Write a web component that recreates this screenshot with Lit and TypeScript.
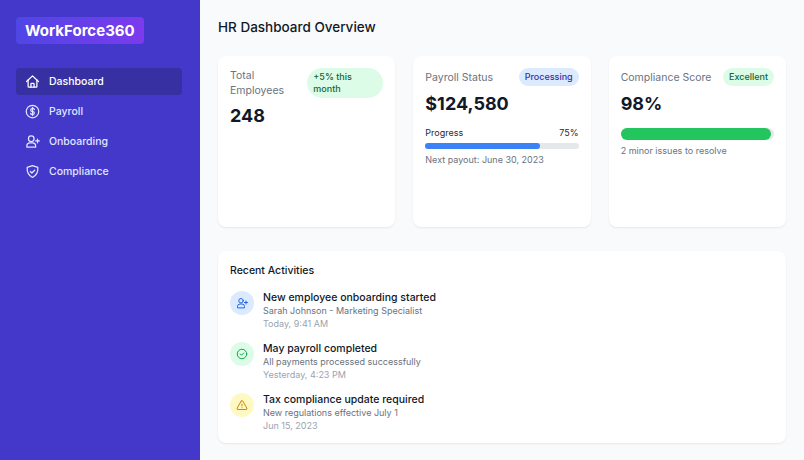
import { LitElement, html, css } from 'lit';
import { customElement } from 'lit/decorators.js';

const icons = {
  home: html`<svg viewBox="0 0 24 24"><path d="M2.500 12 12 3l9.500 9"/><path d="M5 9.500V20a1 1 0 0 0 1 1h12a1 1 0 0 0 1-1V9.500"/><path d="M9.500 21v-5a1 1 0 0 1 1-1h3a1 1 0 0 1 1 1v5"/></svg>`,
  dollar: html`<svg viewBox="0 0 24 24"><circle cx="12" cy="12" r="10"/><path d="M15 9a2.500 2 0 0 0-2.500-1.800h-1a2.400 2.400 0 0 0 0 4.800h1a2.400 2.400 0 0 1 0 4.800h-1A2.500 2 0 0 1 9 15"/><path d="M12 5.500v13"/></svg>`,
  userPlus: html`<svg viewBox="0 0 24 24"><circle cx="10" cy="7.500" r="4.500"/><path d="M3 21v-2a5 5 0 0 1 5-5h4a5 5 0 0 1 5 5v2z"/><path d="M20 8v6M17 11h6"/></svg>`,
  shield: html`<svg viewBox="0 0 24 24"><path d="M12 2.500 20.500 5.500c.5 6.500-2 12.500-8.500 16C5.500 18 3 12 3.500 5.500z"/><path d="m8.500 12 2.500 2.500 4.500-4.500"/></svg>`,
  check: html`<svg viewBox="0 0 24 24"><circle cx="12" cy="12" r="9.500"/><path d="m8.500 12 2.500 2.500 4.500-4.500"/></svg>`,
  warn: html`<svg viewBox="0 0 24 24"><path d="M10.300 4.300 2.500 18a2 2 0 0 0 1.700 3h15.600a2 2 0 0 0 1.700-3L13.700 4.300a2 2 0 0 0-3.400 0z"/><path d="M12 10v4M12 17.500v.1"/></svg>`,
};

@customElement('app-root')
export class AppRoot extends LitElement {
  static styles = css`
    :host {
      display: flex;
      width: 804px;
      height: 460px;
      overflow: hidden;
      font-family: Inter, 'Liberation Sans', sans-serif;
      background: #f9fafb;
      color: #111827;
    }
    svg {
      fill: none;
      stroke: currentColor;
      stroke-width: 2;
      stroke-linecap: round;
      stroke-linejoin: round;
      display: block;
    }
    .sidebar {
      width: 200px;
      flex: none;
      box-sizing: border-box;
      background: #4338ca;
      padding: 17px 18px 0 16px;
    }
    .logo {
      display: inline-block;
      padding: 4px 9px;
      height: 27px;
      box-sizing: border-box;
      border-radius: 4px;
      background: linear-gradient(90deg, #4f46e5, #7c3aed);
      color: #fff;
      font-size: 15px;
      line-height: 19px;
      font-weight: 700;
    }
    nav {
      margin-top: 24px;
      display: flex;
      flex-direction: column;
      gap: 3px;
    }
    .item {
      display: flex;
      align-items: center;
      gap: 9px;
      height: 27px;
      padding: 0 9px;
      border-radius: 4px;
      color: #e0e7ff;
      font-size: 10.500px;
      font-weight: 500;
    }
    .item svg {
      width: 15px;
      height: 15px;
    }
    .item.active {
      background: #3730a3;
      color: #fff;
    }
    main {
      flex: 1;
      padding: 18px;
      min-width: 0;
    }
    h1 {
      margin: 0 0 19px;
      font-size: 13.500px;
      line-height: 19px;
      font-weight: 500;
      color: #111827;
    }
    .cards {
      display: grid;
      grid-template-columns: repeat(3, 1fr);
      gap: 18px;
      margin-bottom: 24px;
    }
    .card {
      background: #fff;
      border-radius: 8px;
      box-shadow: 0 1px 2px rgba(0, 0, 0, 0.08);
      padding: 12px;
    }
    .stat {
      height: 171px;
      box-sizing: border-box;
    }
    .head {
      display: flex;
      justify-content: space-between;
      align-items: center;
    }
    .label {
      font-size: 10.500px;
      line-height: 15px;
      color: #6b7280;
    }
    .label.narrow {
      width: 70px;
    }
    .badge {
      font-size: 9px;
      line-height: 12px;
      font-weight: 500;
      padding: 3px 6px;
      border-radius: 999px;
      white-space: nowrap;
    }
    .badge.green { background: #dcfce7; color: #166534; }
    .badge.blue { background: #dbeafe; color: #3730a3; }
    .badge.wrap { white-space: normal; width: 76px; box-sizing: border-box; }
    .value {
      font-size: 18px;
      line-height: 24px;
      font-weight: 700;
      color: #111827;
      margin-top: 6px;
    }
    .row {
      display: flex;
      justify-content: space-between;
      font-size: 9px;
      line-height: 12px;
      margin-top: 11px;
      color: #1f2937;
    }
    .track {
      height: 6px;
      border-radius: 3px;
      background: #e5e7eb;
      margin-top: 4px;
    }
    .fill {
      height: 100%;
      border-radius: 3px;
      background: #3b82f6;
    }
    .track.big {
      height: 12px;
      border-radius: 6px;
      margin-top: 12px;
    }
    .track.big .fill {
      background: #22c55e;
      border-radius: 6px;
    }
    .note {
      font-size: 9px;
      line-height: 12px;
      color: #6b7280;
      margin-top: 5px;
    }
    .activities {
      height: 192px;
      box-sizing: border-box;
    }
    h2 {
      margin: 0 0 13px;
      font-size: 10.500px;
      line-height: 15px;
      font-weight: 500;
      color: #111827;
    }
    .activity {
      display: flex;
      gap: 9px;
      height: 51px;
    }
    .dot {
      width: 24px;
      height: 24px;
      border-radius: 50%;
      flex: none;
      display: flex;
      align-items: center;
      justify-content: center;
    }
    .dot svg { width: 12px; height: 12px; }
    .dot.blue { background: #dbeafe; color: #2563eb; }
    .dot.green { background: #dcfce7; color: #16a34a; }
    .dot.yellow { background: #fef9c3; color: #ca8a04; }
    .title {
      font-size: 10.500px;
      line-height: 14px;
      font-weight: 500;
      color: #111827;
    }
    .sub {
      font-size: 9px;
      line-height: 12px;
      color: #6b7280;
    }
    .time {
      font-size: 9px;
      line-height: 13px;
      color: #9ca3af;
    }
  `;

  nav = [
    { label: 'Dashboard', icon: icons.home, active: true },
    { label: 'Payroll', icon: icons.dollar },
    { label: 'Onboarding', icon: icons.userPlus },
    { label: 'Compliance', icon: icons.shield },
  ];

  activities = [
    { title: 'New employee onboarding started', sub: 'Sarah Johnson - Marketing Specialist', time: 'Today, 9:41 AM', tone: 'blue', icon: icons.userPlus },
    { title: 'May payroll completed', sub: 'All payments processed successfully', time: 'Yesterday, 4:23 PM', tone: 'green', icon: icons.check },
    { title: 'Tax compliance update required', sub: 'New regulations effective July 1', time: 'Jun 15, 2023', tone: 'yellow', icon: icons.warn },
  ];

  render() {
    return html`
      <aside class="sidebar">
        <div class="logo">WorkForce360</div>
        <nav>
          ${this.nav.map(n => html`<div class="item ${n.active ? 'active' : ''}">${n.icon}<span>${n.label}</span></div>`)}
        </nav>
      </aside>
      <main>
        <h1>HR Dashboard Overview</h1>
        <div class="cards">
          <div class="card stat">
            <div class="head">
              <div class="label narrow">Total Employees</div>
              <div class="badge green wrap">+5% this month</div>
            </div>
            <div class="value">248</div>
          </div>
          <div class="card stat">
            <div class="head">
              <div class="label">Payroll Status</div>
              <div class="badge blue">Processing</div>
            </div>
            <div class="value">$124,580</div>
            <div class="row"><span>Progress</span><span>75%</span></div>
            <div class="track"><div class="fill" style="width:75%"></div></div>
            <div class="note">Next payout: June 30, 2023</div>
          </div>
          <div class="card stat">
            <div class="head">
              <div class="label">Compliance Score</div>
              <div class="badge green">Excellent</div>
            </div>
            <div class="value">98%</div>
            <div class="track big"><div class="fill" style="width:98%"></div></div>
            <div class="note">2 minor issues to resolve</div>
          </div>
        </div>
        <div class="card activities">
          <h2>Recent Activities</h2>
          ${this.activities.map(a => html`
            <div class="activity">
              <div class="dot ${a.tone}">${a.icon}</div>
              <div>
                <div class="title">${a.title}</div>
                <div class="sub">${a.sub}</div>
                <div class="time">${a.time}</div>
              </div>
            </div>
          `)}
        </div>
      </main>
    `;
  }
}
